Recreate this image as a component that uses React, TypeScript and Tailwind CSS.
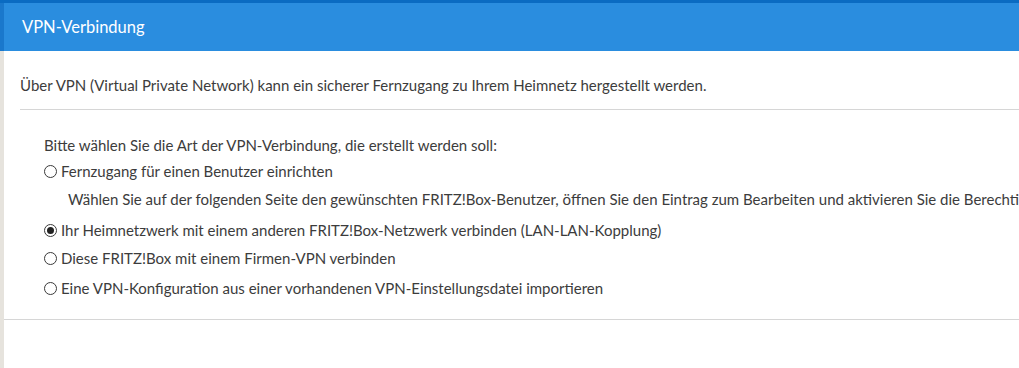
import React from "react";

function Radio({ checked }: { checked?: boolean }) {
  return (
    <span className="inline-flex h-[13px] w-[13px] shrink-0 items-center justify-center rounded-full border border-[#3a3a3a] bg-white">
      {checked && <span className="h-[7px] w-[7px] rounded-full bg-[#222]" />}
    </span>
  );
}

function Option({ label, checked, h }: { label: string; checked?: boolean; h: string }) {
  return (
    <div className={`flex items-center gap-[4px] ${h}`}>
      <Radio checked={checked} />
      <span>{label}</span>
    </div>
  );
}

export default function App() {
  return (
    <div
      className="h-[368px] w-[1019px] overflow-hidden bg-white text-[15px] text-[#3c3c3c]"
      style={{ fontFamily: "Lato, 'Liberation Sans', sans-serif" }}
    >
      <div className="h-[3px] bg-[#0a6bc2]" />
      <div className="flex h-[48px]">
        <div className="w-[4px] bg-[#1a78cc]" />
        <div className="flex flex-1 items-center bg-[#2a8ddf] pl-[18px] text-[16.5px] text-white">
          VPN-Verbindung
        </div>
      </div>
      <div className="flex h-[317px] border-l-[4px] border-[#e6e3dd]">
        <div className="min-w-0 flex-1">
          <div className="pl-[16px]">
            <div className="flex h-[58px] items-center whitespace-nowrap pt-[10px]">
              Über VPN (Virtual Private Network) kann ein sicherer Fernzugang zu Ihrem Heimnetz hergestellt werden.
            </div>
            <div className="h-px bg-[#d6d6d6]" />
          </div>
          <div className="overflow-hidden whitespace-nowrap pl-[40px] pt-[22px]">
            <div className="flex h-[26px] items-center">Bitte wählen Sie die Art der VPN-Verbindung, die erstellt werden soll:</div>
            <Option h="h-[26px]" label="Fernzugang für einen Benutzer einrichten" />
            <div className="flex h-[30px] items-center pl-[24px]">
              Wählen Sie auf der folgenden Seite den gewünschten FRITZ!Box-Benutzer, öffnen Sie den Eintrag zum Bearbeiten und aktivieren Sie die Berechtigung für VPN.
            </div>
            <Option h="h-[32px]" checked label="Ihr Heimnetzwerk mit einem anderen FRITZ!Box-Netzwerk verbinden (LAN-LAN-Kopplung)" />
            <Option h="h-[24px]" label="Diese FRITZ!Box mit einem Firmen-VPN verbinden" />
            <Option h="h-[36px]" label="Eine VPN-Konfiguration aus einer vorhandenen VPN-Einstellungsdatei importieren" />
          </div>
          <div className="mt-[13px] h-px bg-[#d6d6d6]" />
        </div>
      </div>
    </div>
  );
}
